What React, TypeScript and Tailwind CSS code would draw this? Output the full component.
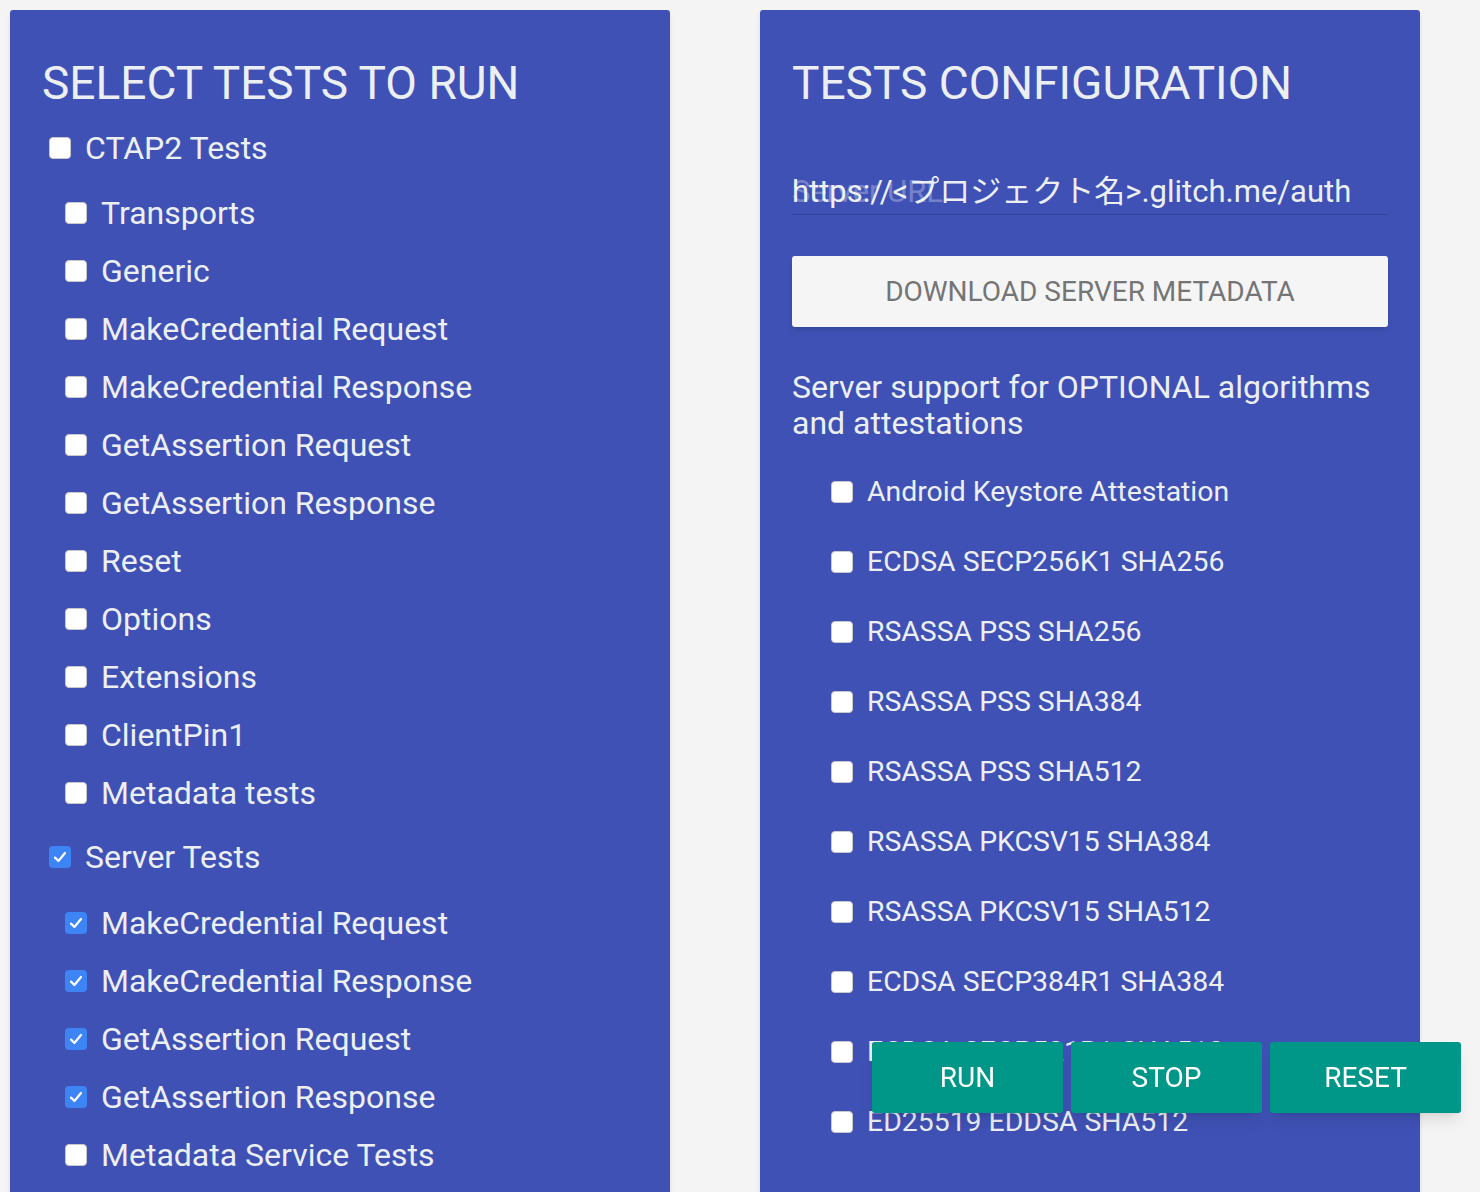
import { FC } from "react"

const font = { fontFamily: "Roboto, 'Noto Sans CJK JP', sans-serif" }

type CheckProps = { checked?: boolean }

const Check: FC<CheckProps> = ({ checked }) =>
  checked ? (
    <span className="flex h-[22px] w-[22px] shrink-0 items-center justify-center rounded-[4px] bg-[#3d84f5]">
      <svg width="16" height="16" viewBox="0 0 16 16" fill="none">
        <path d="M3 8.6 L6.4 12 L13 4" stroke="white" strokeWidth="2.2" strokeLinecap="round" strokeLinejoin="round" />
      </svg>
    </span>
  ) : (
    <span className="h-[22px] w-[22px] shrink-0 rounded-[4px] border border-[#c9c9c9] bg-white" />
  )

type RowProps = { label: string; checked?: boolean; indent: string; height: string; size: string }

const Row: FC<RowProps> = ({ label, checked, indent, height, size }) => (
  <label className={`flex items-center gap-[14px] ${indent} ${height}`}>
    <Check checked={checked} />
    <span className={`${size} whitespace-nowrap leading-none text-[#eceff1]`}>{label}</span>
  </label>
)

const ctap2 = [
  "Transports",
  "Generic",
  "MakeCredential Request",
  "MakeCredential Response",
  "GetAssertion Request",
  "GetAssertion Response",
  "Reset",
  "Options",
  "Extensions",
  "ClientPin1",
  "Metadata tests",
]

const server = [
  { label: "MakeCredential Request", checked: true },
  { label: "MakeCredential Response", checked: true },
  { label: "GetAssertion Request", checked: true },
  { label: "GetAssertion Response", checked: true },
  { label: "Metadata Service Tests", checked: false },
]

const algorithms = [
  "Android Keystore Attestation",
  "ECDSA SECP256K1 SHA256",
  "RSASSA PSS SHA256",
  "RSASSA PSS SHA384",
  "RSASSA PSS SHA512",
  "RSASSA PKCSV15 SHA384",
  "RSASSA PKCSV15 SHA512",
  "ECDSA SECP384R1 SHA384",
  "ECDSA SECP521R1 SHA512",
  "ED25519 EDDSA SHA512",
]

export default function App() {
  return (
    <div className="min-h-screen bg-[#f4f4f4]" style={font}>
      <div className="flex items-stretch gap-[90px] pl-[10px] pt-[10px]">
        <section className="w-[660px] rounded-t-[3px] bg-[#3f51b5] px-[32px] pb-[60px] pt-[45px] shadow-md">
          <h1 className="text-[46px] leading-[56px] text-[#eceff1]">SELECT TESTS TO RUN</h1>
          <div className="mt-[8px]">
            <Row label="CTAP2 Tests" indent="pl-[7px]" height="h-[58px]" size="text-[32px]" />
          </div>
          <div className="mt-[7px]">
            {ctap2.map((t) => (
              <Row key={t} label={t} indent="pl-[23px]" height="h-[58px]" size="text-[32px]" />
            ))}
          </div>
          <div className="mt-[6px]">
            <Row label="Server Tests" checked indent="pl-[7px]" height="h-[58px]" size="text-[32px]" />
          </div>
          <div className="mt-[8px]">
            {server.map((t) => (
              <Row key={t.label} label={t.label} checked={t.checked} indent="pl-[23px]" height="h-[58px]" size="text-[32px]" />
            ))}
          </div>
        </section>

        <section className="w-[660px] rounded-t-[3px] bg-[#3f51b5] px-[32px] pb-[60px] pt-[45px] shadow-md">
          <h1 className="text-[46px] leading-[56px] text-[#eceff1]">TESTS CONFIGURATION</h1>
          <div className="relative mt-[57px] flex h-[47px] items-center border-b border-[#34459e]">
            <span className="whitespace-nowrap text-[31px] leading-none text-[#eceff1]">https://&lt;プロジェクト名&gt;.glitch.me/auth</span>
            <span className="absolute inset-y-0 left-0 flex items-center text-[31px] leading-none text-white/30">Server URL</span>
          </div>
          <button className="mt-[41px] flex h-[71px] w-full items-center justify-center rounded-[3px] bg-[#f5f5f5] text-[28px] uppercase text-[#757575] shadow-md">
            Download server metadata
          </button>
          <p className="mt-[42px] text-[32px] leading-[36px] text-[#eceff1]">
            Server support for OPTIONAL algorithms and attestations
          </p>
          <div className="mt-[16px]">
            {algorithms.map((a) => (
              <Row key={a} label={a} indent="pl-[39px]" height="h-[70px]" size="text-[28.4px]" />
            ))}
          </div>
        </section>
      </div>

      <div className="fixed bottom-[79px] right-[19px] flex gap-[8px]">
        {["RUN", "STOP", "RESET"].map((b) => (
          <button
            key={b}
            className="flex h-[71px] w-[191px] items-center justify-center rounded-[3px] bg-[#009688] text-[28px] text-white shadow-lg"
          >
            {b}
          </button>
        ))}
      </div>
    </div>
  )
}
